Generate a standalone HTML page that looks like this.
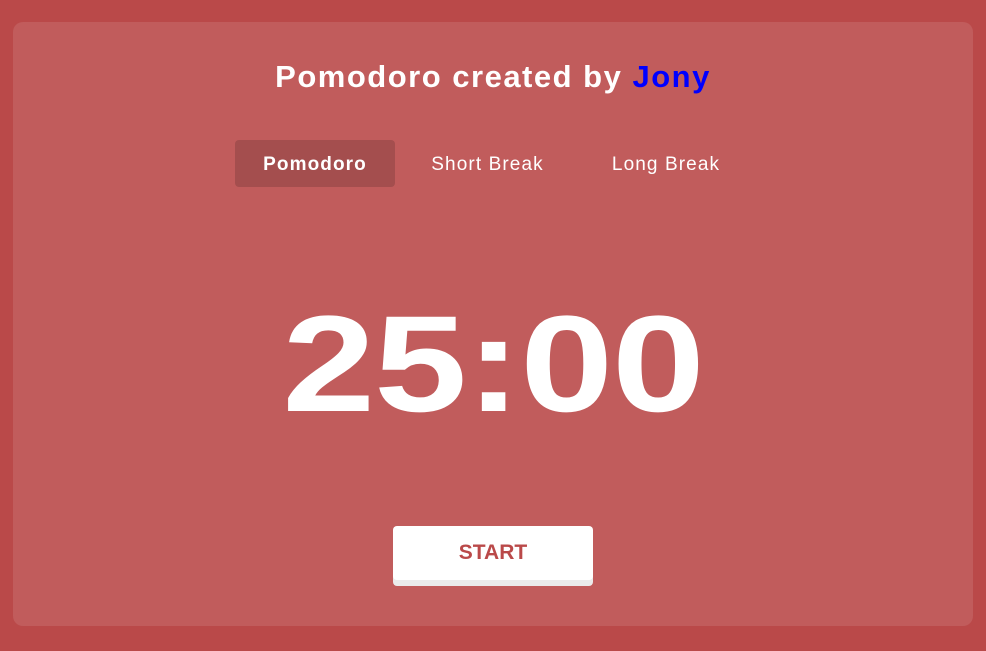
<!DOCTYPE html>
<html><head><style>
html,body{margin:0;padding:0;width:986px;height:651px;background:#ba4949;font-family:"Liberation Sans",sans-serif;overflow:hidden}
.card{position:absolute;left:13px;top:22px;width:960px;height:604px;background:#c15c5c;border-radius:10px}
h1{position:absolute;left:0;width:986px;top:57px;margin:0;text-align:center;color:#fff;font-size:31px;font-weight:bold;line-height:40px;letter-spacing:1.5px}
h1 span{color:#0000ff}
.tab{position:absolute;top:140px;height:47px;line-height:50px;color:#fff;font-size:19px;text-align:center;letter-spacing:1.1px}
.t1{left:235px;width:160px;background:#a44e4e;border-radius:4px;font-weight:bold}
.t2{left:410px;width:155px}
.t3{left:590px;width:152px}
.time{position:absolute;left:0;width:986px;top:280px;text-align:center;color:#fff;font-size:137px;font-weight:bold;line-height:170px;letter-spacing:-1px;transform:scaleX(1.22)}
.btn{position:absolute;left:393px;top:526px;width:200px;height:54px;background:#fff;border-radius:4px;box-shadow:0 6px 0 #ebebeb;color:#ba4949;font-weight:bold;font-size:21px;text-align:center;line-height:54px}
</style></head><body>
<div class="card"></div>
<h1>Pomodoro created by <span>Jony</span></h1>
<div class="tab t1">Pomodoro</div>
<div class="tab t2">Short Break</div>
<div class="tab t3">Long Break</div>
<div class="time">25:00</div>
<div class="btn">START</div>
</body></html>
